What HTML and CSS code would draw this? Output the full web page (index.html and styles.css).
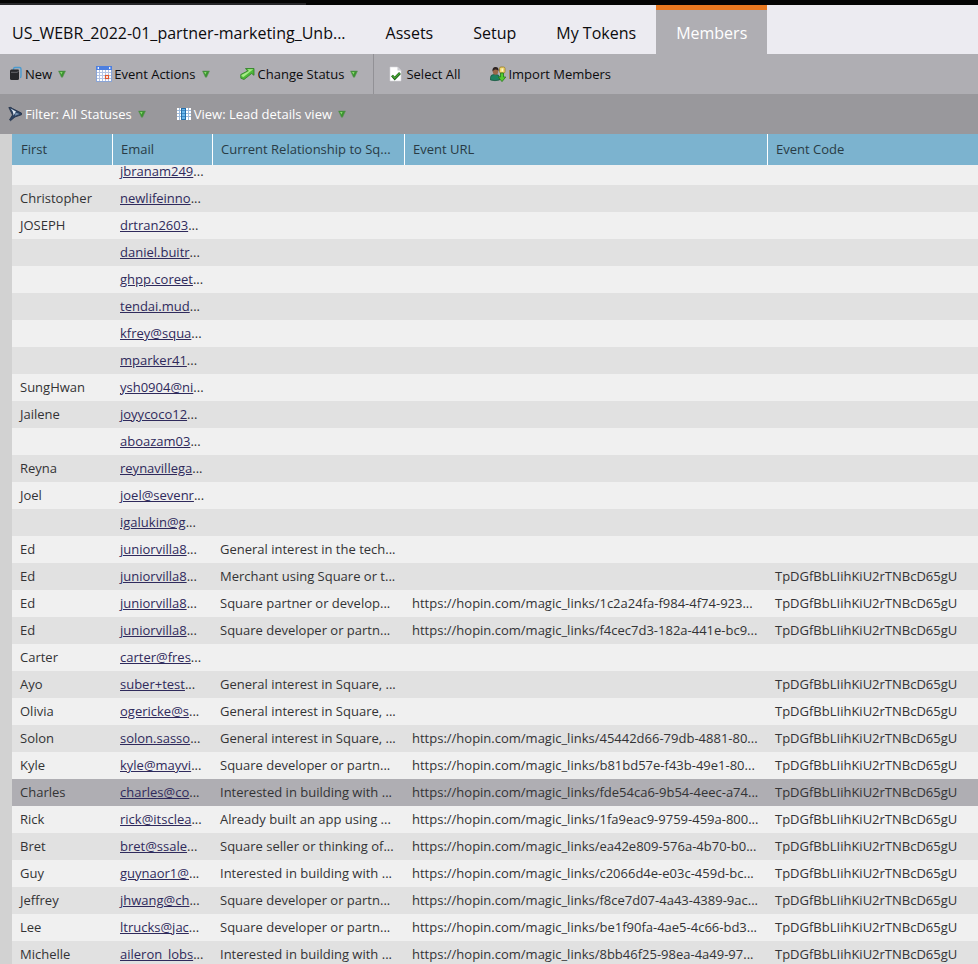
FILE: index.html
```
<!DOCTYPE html>
<html lang="en">
<head>
    <meta charset="UTF-8">
    <meta name="viewport" content="width=device-width, initial-scale=1.0">
    <title>Members</title>
    <link rel="stylesheet" href="styles.css">
</head>
<body>
    <!-- Shared symbols -->
    <svg class="symbols" aria-hidden="true">
        <symbol id="arrow" viewBox="0 0 8 8">
            <path d="M0.500 1h7L4.600 7.200H3.400z" fill="#3c9430" stroke="#5f8f5c" stroke-width="0.500"/>
            <path d="M2 2h2.500L3.500 4.500z" fill="#8bdc70"/>
        </symbol>
    </svg>

    <div class="top-strip"><div class="top-progress"></div></div>

    <!-- Tabs -->
    <nav class="tabs">
        <a href="#" class="tab tab-title">US_WEBR_2022-01_partner-marketing_Unb...</a>
        <a href="#" class="tab">Assets</a>
        <a href="#" class="tab">Setup</a>
        <a href="#" class="tab">My Tokens</a>
        <a href="#" class="tab active">Members</a>
    </nav>

    <!-- Actions -->
    <div class="toolbar">
        <div class="tool-group">
            <button class="tool-btn">
                <svg class="icon" viewBox="-1 0 16 16">
                    <path d="M5.5 4V3q0-1.5 1.5-1.5h4.5Q13 1.5 13 3v7q0 1.5-1 1.5" fill="none" stroke="#4a9bd0" stroke-width="1.4"/>
                    <path d="M3.5 3.5H10q1 0 1 1v8q0 1.5-1.5 1.5h-6Q2 14 2 12.500V5q0-1.500 1.500-1.500z" fill="#26272b"/>
                    <path d="M3 6.300h6.500l1-1.500" fill="none" stroke="#77787d" stroke-width="0.800"/>
                </svg>
                <span>New</span>
                <svg class="arrow"><use href="#arrow"/></svg>
            </button>
            <button class="tool-btn">
                <svg class="icon" viewBox="0 0 16 16">
                    <rect x="0.5" y="0.5" width="15" height="15" fill="#fff" stroke="#8aa5d8"/>
                    <rect x="0" y="0" width="16" height="4" fill="#4d7fe0"/>
                    <path d="M1 2l2-1.300v2.600zM15 2l-2-1.300v2.600z" fill="#fff"/>
                    <path d="M1 6.500h14M1 9.500h14M1 12.500h14M3.500 4v11M6.500 4v11M9.500 4v11M12.500 4v11" stroke="#b3c3e4"/>
                    <rect x="9.500" y="9.500" width="3" height="3" fill="#fff" stroke="#e2562c" stroke-width="1.200"/>
                </svg>
                <span>Event Actions</span>
                <svg class="arrow"><use href="#arrow"/></svg>
            </button>
            <button class="tool-btn">
                <svg class="icon" viewBox="0 0 16 16">
                    <path d="M5.500 2.500H14v6.800l-2.400-1.800L4 13.500.8 12.200V8.500L7.600 5z" fill="#4fb83a" stroke="#2c7f22" stroke-width="0.800"/>
                    <path d="M7.500 3.300h5.700L3.500 11l-2-.8V9L9 5z" fill="#a5ec86"/>
                </svg>
                <span>Change Status</span>
                <svg class="arrow"><use href="#arrow"/></svg>
            </button>
        </div>
        <div class="tool-group">
            <button class="tool-btn">
                <svg class="icon" viewBox="0 0 16 16">
                    <path d="M2 1h7.500L13 4.500V15H2z" fill="#fff" stroke="#d5d5da" stroke-width="0.600"/>
                    <path d="M9.500 1v3.500H13z" fill="#c8c8ce"/>
                    <path d="M4 9.500l2.700 3L12 7" fill="none" stroke="#1c5a18" stroke-width="2.600"/>
                    <path d="M4.300 9.700l2.400 2.400 5-5" fill="none" stroke="#4aae33" stroke-width="1.200"/>
                </svg>
                <span>Select All</span>
            </button>
            <button class="tool-btn">
                <svg class="icon" viewBox="0 0 16 16">
                    <rect x="9.500" y="1" width="5.500" height="6" rx="1.500" fill="#f1d96f" stroke="#9b7a20" stroke-width="0.800"/>
                    <path d="M12.200 2.500v3" stroke="#fff"/>
                    <path d="M0.500 14v-2.500q0-3 3.500-3h2q3.500 0 3.500 3V14q-4.500 1.300-9 0z" fill="#1f8060" stroke="#125039" stroke-width="0.700"/>
                    <ellipse cx="5.500" cy="5.200" rx="2.700" ry="3.500" fill="#9b6748"/>
                    <path d="M2.500 5.500Q2 1 5.500 1t3 4Q7.500 3 5 3.500 3.500 4 2.500 5.500z" fill="#2d2220"/>
                    <path d="M10.500 7h3v4h2.300L12 15.600 8.200 11h2.300z" fill="#54cc2e" stroke="#23791b" stroke-width="0.800"/>
                </svg>
                <span>Import Members</span>
            </button>
        </div>
    </div>

    <!-- Filter and view -->
    <div class="toolbar filter-bar">
        <div class="tool-group">
            <button class="tool-btn">
                <svg class="icon" viewBox="-1 0 16 16">
                    <path d="M0.800 1.500Q3 .8 4.500 2.500L13.500 7v1.800L7 11l-4.500 3.700-1-.9L4.500 9z" fill="#2b4262" stroke="#1b2a42" stroke-width="0.700"/>
                    <path d="M2.500 2.500L8 5.500 5.500 9.500Q5.500 5 2.500 2.500z" fill="#dfe8f2"/>
                    <path d="M7.500 6.500l4 1.500-4.500 1.800z" fill="#7893b3"/>
                </svg>
                <span>Filter: All Statuses</span>
                <svg class="arrow"><use href="#arrow"/></svg>
            </button>
            <button class="tool-btn">
                <svg class="icon" viewBox="0 0 16 16">
                    <rect x="1" y="2" width="14" height="12" fill="#fff"/>
                    <path d="M1 4.500h14M1 7.500h14M1 10.500h14M3.500 2v12M12.500 2v12" stroke="#9dbbdd"/>
                    <rect x="5.500" y="2.500" width="4" height="11" fill="#69b7ed" stroke="#256eaa"/>
                    <path d="M6 4.500h3M6 7.500h3M6 10.500h3" stroke="#3e87c3"/>
                </svg>
                <span>View: Lead details view</span>
                <svg class="arrow"><use href="#arrow"/></svg>
            </button>
        </div>
    </div>

    <!-- Members grid -->
    <div class="grid">
        <table class="members">
            <colgroup>
                <col class="col-first">
                <col class="col-email">
                <col class="col-relationship">
                <col class="col-url">
                <col>
            </colgroup>
            <thead>
                <tr><th>First</th><th>Email</th><th>Current Relationship to Sq...</th><th>Event URL</th><th>Event Code</th></tr>
            </thead>
            <tbody>
                <tr><td></td><td><a href="#">jbranam249</a>...</td><td></td><td></td><td></td></tr>
                <tr><td>Christopher</td><td><a href="#">newlifeinno</a>...</td><td></td><td></td><td></td></tr>
                <tr><td>JOSEPH</td><td><a href="#">drtran2603</a>...</td><td></td><td></td><td></td></tr>
                <tr><td></td><td><a href="#">daniel.buitr</a>...</td><td></td><td></td><td></td></tr>
                <tr><td></td><td><a href="#">ghpp.coreet</a>...</td><td></td><td></td><td></td></tr>
                <tr><td></td><td><a href="#">tendai.mud</a>...</td><td></td><td></td><td></td></tr>
                <tr><td></td><td><a href="#">kfrey@squa</a>...</td><td></td><td></td><td></td></tr>
                <tr><td></td><td><a href="#">mparker41</a>...</td><td></td><td></td><td></td></tr>
                <tr><td>SungHwan</td><td><a href="#">ysh0904@ni</a>...</td><td></td><td></td><td></td></tr>
                <tr><td>Jailene</td><td><a href="#">joyycoco12</a>...</td><td></td><td></td><td></td></tr>
                <tr><td></td><td><a href="#">aboazam03</a>...</td><td></td><td></td><td></td></tr>
                <tr><td>Reyna</td><td><a href="#">reynavillega</a>...</td><td></td><td></td><td></td></tr>
                <tr><td>Joel</td><td><a href="#">joel@sevenr</a>...</td><td></td><td></td><td></td></tr>
                <tr><td></td><td><a href="#">igalukin@g</a>...</td><td></td><td></td><td></td></tr>
                <tr><td>Ed</td><td><a href="#">juniorvilla8</a>...</td><td>General interest in the tech...</td><td></td><td></td></tr>
                <tr><td>Ed</td><td><a href="#">juniorvilla8</a>...</td><td>Merchant using Square or t...</td><td></td><td>TpDGfBbLIihKiU2rTNBcD65gU</td></tr>
                <tr><td>Ed</td><td><a href="#">juniorvilla8</a>...</td><td>Square partner or develop...</td><td>https://hopin.com/magic_links/1c2a24fa-f984-4f74-923...</td><td>TpDGfBbLIihKiU2rTNBcD65gU</td></tr>
                <tr><td>Ed</td><td><a href="#">juniorvilla8</a>...</td><td>Square developer or partn...</td><td>https://hopin.com/magic_links/f4cec7d3-182a-441e-bc9...</td><td>TpDGfBbLIihKiU2rTNBcD65gU</td></tr>
                <tr><td>Carter</td><td><a href="#">carter@fres</a>...</td><td></td><td></td><td></td></tr>
                <tr><td>Ayo</td><td><a href="#">suber+test</a>...</td><td>General interest in Square, ...</td><td></td><td>TpDGfBbLIihKiU2rTNBcD65gU</td></tr>
                <tr><td>Olivia</td><td><a href="#">ogericke@s</a>...</td><td>General interest in Square, ...</td><td></td><td>TpDGfBbLIihKiU2rTNBcD65gU</td></tr>
                <tr><td>Solon</td><td><a href="#">solon.sasso</a>...</td><td>General interest in Square, ...</td><td>https://hopin.com/magic_links/45442d66-79db-4881-80...</td><td>TpDGfBbLIihKiU2rTNBcD65gU</td></tr>
                <tr><td>Kyle</td><td><a href="#">kyle@mayvi</a>...</td><td>Square developer or partn...</td><td>https://hopin.com/magic_links/b81bd57e-f43b-49e1-80...</td><td>TpDGfBbLIihKiU2rTNBcD65gU</td></tr>
                <tr class="selected"><td>Charles</td><td><a href="#">charles@co</a>...</td><td>Interested in building with ...</td><td>https://hopin.com/magic_links/fde54ca6-9b54-4eec-a74...</td><td>TpDGfBbLIihKiU2rTNBcD65gU</td></tr>
                <tr><td>Rick</td><td><a href="#">rick@itsclea</a>...</td><td>Already built an app using ...</td><td>https://hopin.com/magic_links/1fa9eac9-9759-459a-800...</td><td>TpDGfBbLIihKiU2rTNBcD65gU</td></tr>
                <tr><td>Bret</td><td><a href="#">bret@ssale</a>...</td><td>Square seller or thinking of...</td><td>https://hopin.com/magic_links/ea42e809-576a-4b70-b0...</td><td>TpDGfBbLIihKiU2rTNBcD65gU</td></tr>
                <tr><td>Guy</td><td><a href="#">guynaor1@</a>...</td><td>Interested in building with ...</td><td>https://hopin.com/magic_links/c2066d4e-e03c-459d-bc...</td><td>TpDGfBbLIihKiU2rTNBcD65gU</td></tr>
                <tr><td>Jeffrey</td><td><a href="#">jhwang@ch</a>...</td><td>Square developer or partn...</td><td>https://hopin.com/magic_links/f8ce7d07-4a43-4389-9ac...</td><td>TpDGfBbLIihKiU2rTNBcD65gU</td></tr>
                <tr><td>Lee</td><td><a href="#">ltrucks@jac</a>...</td><td>Square developer or partn...</td><td>https://hopin.com/magic_links/be1f90fa-4ae5-4c66-bd3...</td><td>TpDGfBbLIihKiU2rTNBcD65gU</td></tr>
                <tr><td>Michelle</td><td><a href="#">aileron_lobs</a>...</td><td>Interested in building with ...</td><td>https://hopin.com/magic_links/8bb46f25-98ea-4a49-97...</td><td>TpDGfBbLIihKiU2rTNBcD65gU</td></tr>
            </tbody>
        </table>
    </div>

    <script>
        // Keep the list slightly scrolled under its header
        document.querySelector('.grid').scrollTop = 7;
    </script>
</body>
</html>
```
FILE: styles.css
```
* {
    margin: 0;
    padding: 0;
    box-sizing: border-box;
}

:root {
    --tab-bg: #ecebf1;
    --toolbar-bg: #afaeb3;
    --filter-bg: #99989c;
    --header-bg: #7cb3cf;
    --accent: #e87820;
    --text: #333335;
}

body {
    height: 100vh;
    display: flex;
    flex-direction: column;
    overflow: hidden;
    background-color: #d2d2d2;
    color: var(--text);
    font-family: "Open Sans", "Noto Sans", sans-serif;
    font-size: 13px;
}

.symbols {
    display: none;
}

.top-strip {
    flex: none;
    height: 5px;
    padding-top: 3px;
    background-color: #050505;
}

.top-progress {
    width: 306px;
    height: 2px;
    background-color: #28282b;
}

/* Tabs */
.tabs {
    flex: none;
    display: flex;
    height: 49px;
    background-color: var(--tab-bg);
}

.tab {
    padding: 12px 20px 0;
    border-top: 5px solid transparent;
    color: #0c0c0e;
    font-size: 16px;
    line-height: 22px;
    text-decoration: none;
    white-space: nowrap;
}

.tab-title {
    padding-left: 12px;
}

.tab.active {
    background-color: var(--toolbar-bg);
    border-top-color: var(--accent);
    color: #fff;
}

/* Toolbars */
.toolbar {
    flex: none;
    display: flex;
    height: 40px;
    background-color: var(--toolbar-bg);
}

.tool-group {
    display: flex;
    gap: 30px;
    padding: 0 15px 0 14px;
}

.tool-group:first-child {
    padding-left: 7px;
}

.tool-group + .tool-group {
    border-left: 1px solid #929196;
}

.tool-btn {
    display: flex;
    align-items: center;
    background: none;
    border: none;
    color: #0c0c0e;
    font: inherit;
    white-space: nowrap;
    cursor: pointer;
}

.icon {
    width: 16px;
    height: 16px;
    margin-right: 2px;
}

.arrow {
    width: 8px;
    height: 8px;
    margin-left: 6px;
}

.filter-bar {
    background-color: var(--filter-bg);
}

.filter-bar .tool-btn {
    color: #fff;
}

/* Members grid */
.grid {
    flex: 1;
    min-height: 0;
    margin-left: 12px;
    overflow: auto;
    scrollbar-width: none;
}

.members {
    width: 100%;
    table-layout: fixed;
    border-collapse: separate;
    border-spacing: 0;
}

.col-first, .col-email {
    width: 100px;
}

.col-relationship {
    width: 192px;
}

.col-url {
    width: 363px;
}

.members th {
    position: sticky;
    top: 0;
    height: 31px;
    padding: 0 8px 2px;
    background-color: var(--header-bg);
    border-left: 1px solid #fff;
    color: #293b45;
    font-weight: normal;
    text-align: left;
    white-space: nowrap;
}

.members th:first-child {
    border-left-color: var(--header-bg);
}

.members td {
    height: 27px;
    padding: 0 8px 1px;
    line-height: 18px;
    white-space: nowrap;
}

.members tbody tr {
    background-color: #f0f0f0;
}

.members tbody tr:nth-child(even) {
    background-color: #e1e1e1;
}

.members tbody tr.selected {
    background-color: #afaeb3;
}

.members a {
    color: #2f2a5c;
}
```
